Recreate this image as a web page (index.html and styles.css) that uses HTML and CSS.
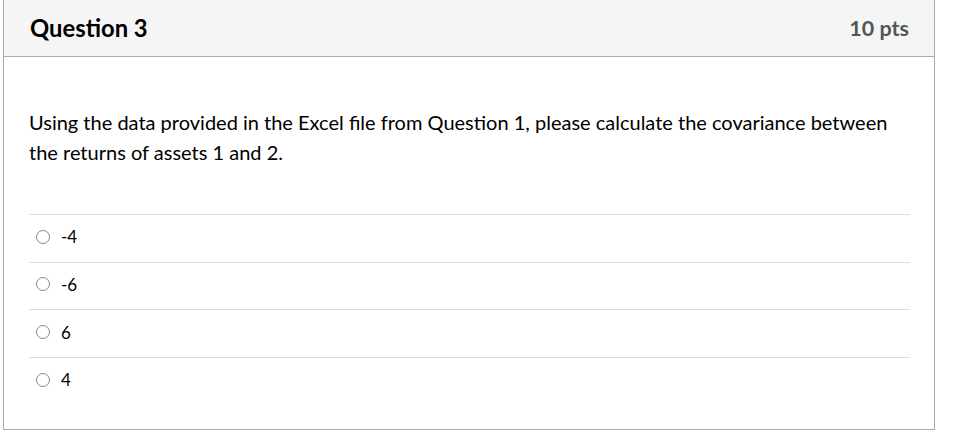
FILE: index.html
```html
<!DOCTYPE html>
<html>
<head>
<meta charset="utf-8">
<link rel="stylesheet" href="styles.css">
</head>
<body>
<div class="card">
  <div class="header">
    <span class="title">Question 3</span>
    <span class="pts">10 pts</span>
  </div>
  <div class="content">
    <p class="qtext">Using the data provided in the Excel file from Question 1, please calculate the covariance between the returns of assets 1 and 2.</p>
    <div class="answers">
      <label class="answer"><span class="radio"></span><span class="label">-4</span></label>
      <label class="answer"><span class="radio"></span><span class="label">-6</span></label>
      <label class="answer"><span class="radio"></span><span class="label">6</span></label>
      <label class="answer"><span class="radio"></span><span class="label">4</span></label>
    </div>
  </div>
</div>
</body>
</html>
```
FILE: styles.css
```css
html, body {
  margin: 0;
  padding: 0;
  background: #fff;
}
body {
  font-family: Lato, "Noto Sans", sans-serif;
  color: #2d3b45;
}
.card {
  margin-left: 3px;
  width: 930px;
  height: 429px;
  border: 1px solid #aaaaaa;
  border-top: none;
  display: flex;
  flex-direction: column;
}
.header {
  height: 57px;
  box-sizing: border-box;
  background: #f5f5f5;
  border-bottom: 1px solid #aaaaaa;
  display: flex;
  align-items: center;
  justify-content: space-between;
  padding: 0 25px 0 26px;
}
.title {
  font-weight: 700;
  font-size: 23.8px;
  color: #000;
}
.pts {
  font-weight: 700;
  font-size: 21.5px;
  color: #555;
}
.content {
  padding: 0 24px 0 25px;
}
.qtext {
  margin: 50px 0 0 0;
  font-size: 20px;
  line-height: 30px;
  color: #000;
}
.answers {
  margin-top: 47px;
}
.answer {
  display: flex;
  align-items: center;
  height: 47.67px;
  border-top: 1px solid #dddddd;
  box-sizing: border-box;
  padding-left: 7px;
  padding-bottom: 3px;
}
.radio {
  width: 12px;
  height: 12px;
  border: 1px solid #888;
  border-radius: 50%;
  margin-right: 11px;
}
.label {
  font-size: 17px;
  color: #000;
}
```
